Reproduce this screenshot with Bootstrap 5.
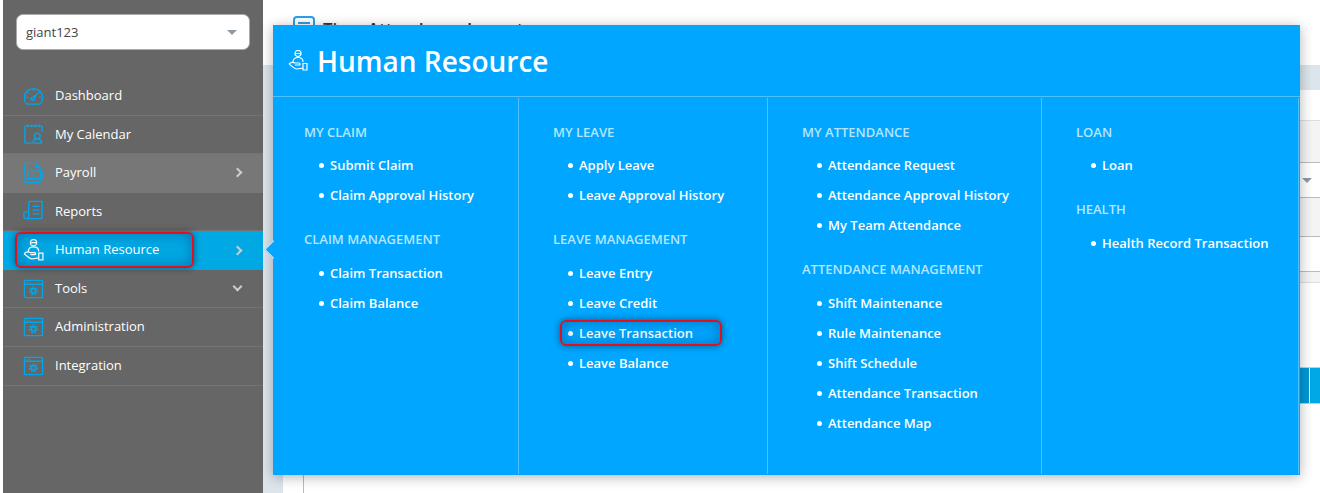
<!DOCTYPE html>
<html lang="en"><head><meta charset="utf-8"><title>Human Resource</title>
<link href="https://cdn.jsdelivr.net/npm/bootstrap@5.3.0/dist/css/bootstrap.min.css" rel="stylesheet">
<style>
html,body{height:493px;overflow:hidden}
body{font-family:"Open Sans",sans-serif;background:#fff;position:relative}
.shell{height:493px;padding-left:3px}
.side{width:260px;height:493px;background:#666;color:#fff;flex:none}
.acct{margin:14px 13px 27px;height:36px;background:#fff;border:1px solid #aaa;border-radius:7px;color:#444;font-size:13px;padding:1px 9px 0}
.caret-d{width:0;height:0;border-left:5px solid transparent;border-right:5px solid transparent;border-top:5px solid #8f99a6}
.acct .caret-d{margin-right:3px}
.mitem{height:38.57px;padding-left:20px;padding-right:19px;border-bottom:1px solid #747474;font-size:13px;color:#fff;position:relative}
.mitem svg{width:21px;height:22px;margin-right:11px;flex:none;fill:none;stroke:#00a6ea;stroke-width:1.4}
.mitem.lit{background:#777;border-bottom-color:#777}
.mitem.act{background:#00a8e4;border-bottom-color:#00a8e4}
.mitem.act svg{stroke:#fff;stroke-width:1.2}
.mark-red{position:absolute;border:2px solid #e0101f;border-radius:6px;box-shadow:0 0 7px rgba(0,0,0,.45),inset 0 0 14px rgba(0,60,120,.45);pointer-events:none}
.mark-a{left:12px;top:1px;width:179px;height:36px}
.mark-b{left:-7px;top:0;width:162px;height:26px}
.chev{width:7px;height:7px;border-top:2px solid #ccc;border-right:2px solid #ccc;transform:rotate(45deg);margin-right:3px}
.chev.dn{transform:rotate(135deg);margin-top:-4px}
.cog-in{stroke-width:1.8}
.cog-out{stroke-width:1.6;stroke-dasharray:1.7 1.76}
.work{background:#dce4ec}
.topb{height:65px;background:#fff;padding:16px 0 0 30px;font-size:17px;font-weight:600;color:#333}
.topb svg{width:22px;height:22px;fill:none;stroke:#2a9fe8;stroke-width:2}
.band{height:25px;background:#dce4ec}
.sheet{margin-left:20px;background:#fff;height:403px;position:relative}
.vline{position:absolute;left:20px;top:0;bottom:0;width:1px;background:#bbb}
.r0{height:30px}
.r1{height:43px;background:#f4f4f4;border-top:1px solid #ddd;border-bottom:1px solid #bbb}
.r2{height:35px;border-bottom:1px solid #bbb;padding-right:8px}
.r3{height:39px;background:#f4f4f4;border-bottom:1px solid #bbb}
.r4{height:35px;border-bottom:1px solid #bbb}
.r5{height:11px;background:#f4f4f4;border-bottom:1px solid #ddd}
.r6{height:84px}
.r7{height:37px;border-bottom:1px solid #ccc;border-top:1px solid #ccc}
.seg-a{background:#0099d6}
.seg-b{background:#00a8e4;width:11px;border-left:1px solid #fff}
.mega{position:absolute;left:273px;top:25px;width:1027px;height:450px;background:#00a6ff;color:#fff;box-shadow:0 2px 12px rgba(0,0,0,.3)}
.mega-tip{position:absolute;left:-6.500px;top:218px;width:13px;height:13px;background:#00a6ff;border-left:1px solid #cfeeff;border-bottom:1px solid #cfeeff;transform:rotate(45deg)}
.mhead{height:72px;border-bottom:1px solid #4dc2ff;padding-left:15px}
.mhead svg{width:20px;height:21px;fill:none;stroke:#fff;stroke-width:1.200;margin-right:9px;flex:none}
.mhead h2{font-size:28px;font-weight:600;margin:2px 0 0;font-family:"Open Sans",sans-serif}
.mcols{height:378px}
.mcol{border-right:1px solid #4dc2ff;padding:26px 0 0 31px;height:376px;margin-top:1px}
.w1{width:246px}.w2{width:249px;padding-left:34px}.w3{width:274px;padding-left:34px}.w4{width:257px;padding-left:34px}
.mgrp{font-size:13px;font-weight:600;color:#b5e6ff;text-transform:uppercase;line-height:17px;margin-bottom:12px}
.mcol>.mgrp:first-child{margin-bottom:11px}
.mlist{list-style:none;padding:0 0 0 14px;margin:0 0 19px}
.mlist li{font-size:13px;font-weight:600;height:30px;line-height:26px;padding-left:12px;position:relative;white-space:nowrap}
.mlist li::before{content:"";position:absolute;left:1px;top:11px;width:5px;height:5px;border-radius:50%;background:#fff}
</style></head><body>
<div class="shell d-flex">
<nav class="side">
<div class="acct d-flex align-items-center justify-content-between"><span>giant123</span><span class="caret-d"></span></div>
<div class="mitem d-flex align-items-center"><svg viewBox="0 0 22 22"><path d="M4 19.500a9.600 9.600 0 1 1 14 0z"/><path d="M8 14l6-4-3 6zM11 4v2M5 7l1.500 1.500M17 7l-1.500 1.500M3 12.500h2M17 12.500h2"/></svg><span>Dashboard</span></div>
<div class="mitem d-flex align-items-center"><svg viewBox="0 0 22 22"><path d="M9 20.500H3a1 1 0 0 1-1-1V3.500a1 1 0 0 1 1-1h16a1 1 0 0 1 1 1V9M5 1v3M9 1v3M13 1v3M17 1v3"/><circle cx="15" cy="13" r="3"/><path d="M10.500 20.500c0-6 9-6 9 0z"/></svg><span>My Calendar</span></div>
<div class="mitem lit d-flex align-items-center justify-content-between"><span class="d-flex align-items-center"><svg viewBox="0 0 22 22"><path d="M14 1H3a1 1 0 0 0-1 1v18a1 1 0 0 0 1 1h14a1 1 0 0 0 1-1V5zM14 1v4h4"/><path d="M5 9h14v8H5zM19 11h2v4h-2M11 11v4"/></svg><span>Payroll</span></span><span class="chev"></span></div>
<div class="mitem d-flex align-items-center"><svg viewBox="0 0 22 22"><path d="M6 3a2 2 0 0 1 2-2h12v16a2 2 0 0 1-2 2H3a2 2 0 0 1-2-2v-5h5zM6 12v5a2 2 0 0 1-2 2M10 6h7M10 10h7M10 14h7"/></svg><span>Reports</span></div>
<div class="mitem act d-flex align-items-center justify-content-between"><span class="d-flex align-items-center"><svg viewBox="0 0 20 21"><circle cx="10" cy="3.500" r="3"/><path d="M7 3.500h6M5 12c0-3 2-4.500 5-4.500s5 1.500 5 4.500M1 14c2-2 4-2 6-1h4c1.500 0 1.500 2 0 2H7M1 14c3 2 5 5 8 5l6-1M15 13.500h4V20h-4z"/></svg><span>Human Resource</span></span><span class="chev"></span><span class="mark-red mark-a"></span></div>
<div class="mitem d-flex align-items-center justify-content-between"><span class="d-flex align-items-center"><svg viewBox="0 0 22 22"><rect x="1.500" y="2" width="19" height="18" rx="1"/><path d="M1.500 6h19M4 4h1M6.500 4h1"/><circle class="cog-in" cx="11" cy="13" r="2.300"/><circle class="cog-out" cx="11" cy="13" r="4"/></svg><span>Tools</span></span><span class="chev dn"></span></div>
<div class="mitem d-flex align-items-center"><svg viewBox="0 0 22 22"><rect x="1.500" y="2" width="19" height="18" rx="1"/><path d="M1.500 6h19M4 4h1M6.500 4h1"/><circle class="cog-in" cx="11" cy="13" r="2.300"/><circle class="cog-out" cx="11" cy="13" r="4"/></svg><span>Administration</span></div>
<div class="mitem d-flex align-items-center"><svg viewBox="0 0 22 22"><rect x="1.500" y="2" width="19" height="18" rx="1"/><path d="M1.500 6h19M4 4h1M6.500 4h1"/><circle class="cog-in" cx="11" cy="13" r="2.300"/><circle class="cog-out" cx="11" cy="13" r="4"/></svg><span>Integration</span></div>
</nav>
<main class="work flex-grow-1">
<div class="topb d-flex gap-2"><svg viewBox="0 0 22 22"><rect x="1" y="1" width="20" height="20" rx="3"/><path d="M5 7h12M5 12h12"/></svg><span>Time Attendance Import</span></div>
<div class="band"></div>
<div class="sheet">
<div class="vline"></div>
<div class="r0"></div><div class="r1"></div>
<div class="r2 d-flex align-items-center justify-content-end"><span class="caret-d"></span></div>
<div class="r3"></div><div class="r4"></div><div class="r5"></div><div class="r6"></div><div class="r7 d-flex"><div class="seg-a flex-grow-1"></div><div class="seg-b"></div></div>
</div>
</main>
</div>
<section class="mega">
<span class="mega-tip"></span>
<div class="mhead d-flex align-items-center"><svg viewBox="0 0 20 21"><circle cx="10" cy="3.500" r="3"/><path d="M7 3.500h6M5 12c0-3 2-4.500 5-4.500s5 1.500 5 4.500M1 14c2-2 4-2 6-1h4c1.500 0 1.500 2 0 2H7M1 14c3 2 5 5 8 5l6-1M15 13.500h4V20h-4z"/></svg><h2>Human Resource</h2></div>
<div class="mcols d-flex">
<div class="mcol w1"><div class="mgrp">My Claim</div><ul class="mlist"><li>Submit Claim</li><li>Claim Approval History</li></ul><div class="mgrp">Claim Management</div><ul class="mlist"><li>Claim Transaction</li><li>Claim Balance</li></ul></div>
<div class="mcol w2"><div class="mgrp">My Leave</div><ul class="mlist"><li>Apply Leave</li><li>Leave Approval History</li></ul><div class="mgrp">Leave Management</div><ul class="mlist"><li>Leave Entry</li><li>Leave Credit</li><li>Leave Transaction<span class="mark-red mark-b"></span></li><li>Leave Balance</li></ul></div>
<div class="mcol w3"><div class="mgrp">My Attendance</div><ul class="mlist"><li>Attendance Request</li><li>Attendance Approval History</li><li>My Team Attendance</li></ul><div class="mgrp">Attendance Management</div><ul class="mlist"><li>Shift Maintenance</li><li>Rule Maintenance</li><li>Shift Schedule</li><li>Attendance Transaction</li><li>Attendance Map</li></ul></div>
<div class="mcol w4"><div class="mgrp">Loan</div><ul class="mlist"><li>Loan</li></ul><div class="mgrp">Health</div><ul class="mlist"><li>Health Record Transaction</li></ul></div>
</div>
</section>
</body></html>
